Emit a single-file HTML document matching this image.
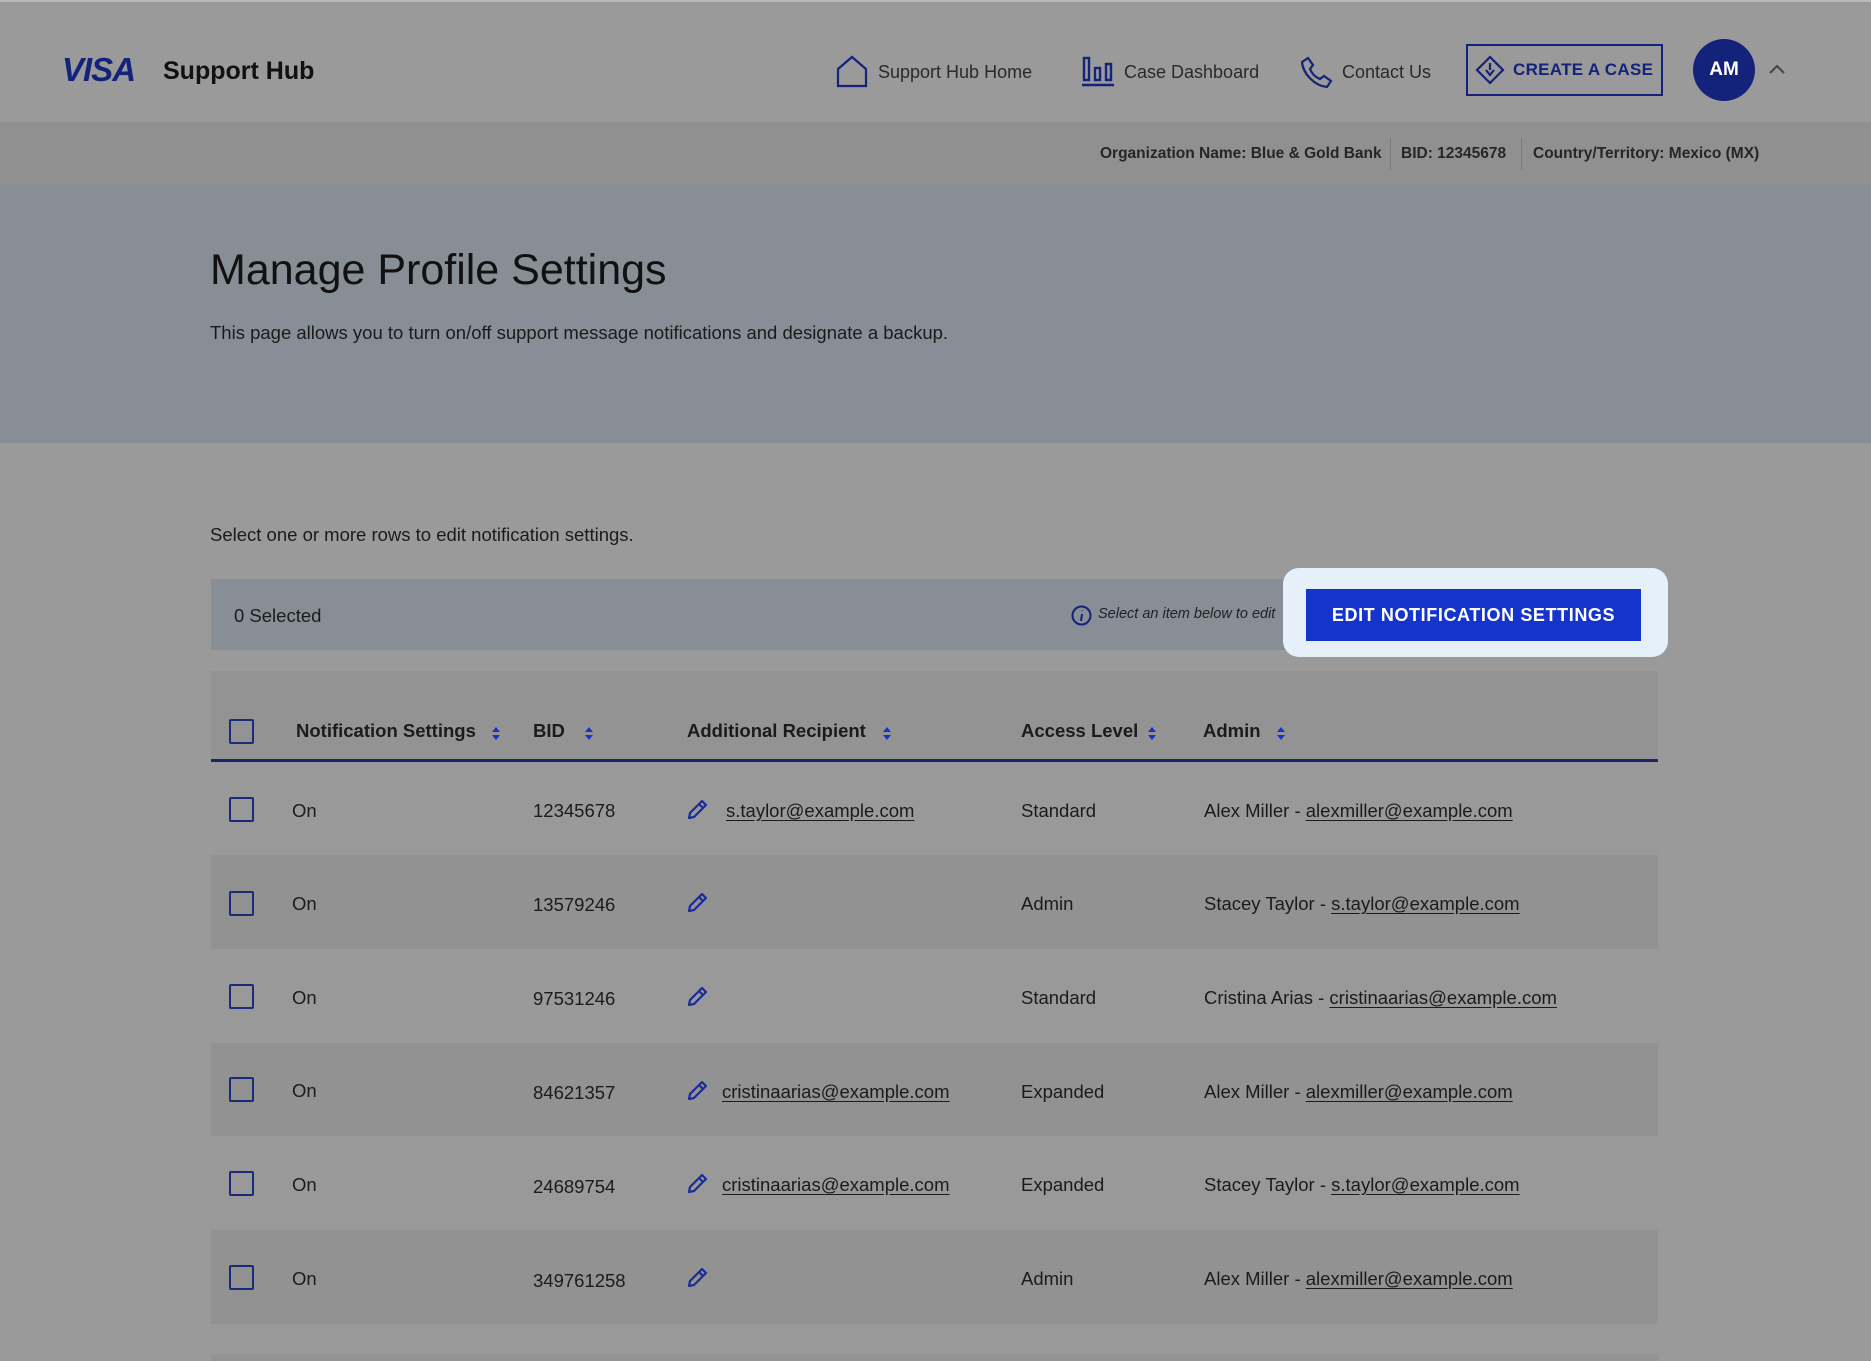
<!DOCTYPE html>
<html><head><meta charset="utf-8"><style>
*{margin:0;padding:0;box-sizing:border-box}
body{width:1871px;height:1351px;overflow:hidden;background:#9a9a9a;font-family:"Liberation Sans",sans-serif;color:#1b1b1b;position:relative}
.a{position:absolute;white-space:nowrap}
.hdr{left:0;top:0;width:1871px;height:122px;background:#9a9a9a;border-top:2px solid #b8b8b8}
.info{left:0;top:122px;width:1871px;height:63px;background:#909090}
.hero{left:0;top:185px;width:1871px;height:258px;background:#878e96}
.nav{font-size:18px;color:#2a2a2a;top:62px}
.navy{color:#13227a}
.tb{left:211px;top:579px;width:1100px;height:71px;background:#878e96}
.hl{left:1283px;top:568px;width:385px;height:89px;background:#e6f0f8;border-radius:16px}
.btn{left:1306px;top:589px;width:335px;height:52px;background:#1434cb;color:#fff;font-weight:bold;font-size:18px;letter-spacing:.6px;display:flex;align-items:center;justify-content:center}
.tbl{left:211px;top:671px;width:1447px;height:690px;background:#939393}
.hline{left:211px;top:759px;width:1447px;height:3px;background:#1c2566}
.row{left:211px;width:1447px;height:94px}
.cb{width:25px;height:25px;border:2.5px solid #1a2b7a;border-radius:2px}
.th{font-weight:bold;font-size:18.5px;top:720px}
.td{font-size:18.5px}
u{text-decoration:underline;text-underline-offset:3px}
</style></head><body>
<div class="a hdr"></div>
<div class="a" style="left:62px;top:51px;font-size:33px;font-weight:bold;font-style:italic;color:#13227a;letter-spacing:-1px">VISA</div>
<div class="a" style="left:163px;top:57px;font-size:25px;font-weight:bold;color:#111">Support Hub</div>

<svg class="a" style="left:835px;top:54px" width="34" height="34" viewBox="0 0 34 34" fill="none" stroke="#13227a" stroke-width="2.2"><path d="M3 15 L17 3 L31 15 V32 H3 Z"/></svg>
<div class="a nav" style="left:878px">Support Hub Home</div>
<svg class="a" style="left:1081px;top:55px" width="34" height="32" viewBox="0 0 34 32" fill="none" stroke="#13227a" stroke-width="2.4"><rect x="3" y="3" width="5" height="22"/><rect x="14" y="13" width="5" height="12"/><rect x="25" y="9" width="5" height="16"/><path d="M1 30 H33"/></svg>
<div class="a nav" style="left:1124px">Case Dashboard</div>
<svg class="a" style="left:1300px;top:55px" width="34" height="34" viewBox="0 0 34 34" fill="none" stroke="#13227a" stroke-width="2.2"><path d="M8 3 L13 10 L10 14 C12 19 15 22 20 24 L24 21 L31 26 L27 32 C15 31 3 19 2 7 Z"/></svg>
<div class="a nav" style="left:1342px">Contact Us</div>
<div class="a" style="left:1466px;top:44px;width:197px;height:52px;border:2px solid #13227a"></div>
<svg class="a" style="left:1475px;top:55px" width="30" height="30" viewBox="0 0 30 30" fill="none" stroke="#13227a" stroke-width="2.2"><path d="M15 2 L28 15 L15 28 L2 15 Z M15 8 V15 M11 15 L15 20 L19 15"/></svg>
<div class="a navy" style="left:1513px;top:60px;font-size:17px;font-weight:bold;letter-spacing:.3px">CREATE A CASE</div>
<div class="a" style="left:1693px;top:39px;width:62px;height:62px;border-radius:50%;background:#13227a;color:#fff;font-weight:bold;font-size:19px;display:flex;align-items:center;justify-content:center">AM</div>
<svg class="a" style="left:1768px;top:63px" width="18" height="12" viewBox="0 0 18 12" fill="none" stroke="#444" stroke-width="2"><path d="M2 10 L9 3 L16 10"/></svg>

<div class="a info"></div>
<div class="a" style="left:1100px;top:145px;font-size:15.5px;font-weight:bold;color:#262626">Organization Name: Blue &amp; Gold Bank</div>
<div class="a" style="left:1390px;top:138px;width:1px;height:32px;background:#7a7a7a"></div>
<div class="a" style="left:1401px;top:145px;font-size:15.5px;font-weight:bold;color:#262626">BID: 12345678</div>
<div class="a" style="left:1521px;top:138px;width:1px;height:32px;background:#7a7a7a"></div>
<div class="a" style="left:1533px;top:145px;font-size:15.5px;font-weight:bold;color:#262626">Country/Territory: Mexico (MX)</div>

<div class="a hero"></div>
<div class="a" style="left:210px;top:246px;font-size:43px;color:#111">Manage Profile Settings</div>
<div class="a" style="left:210px;top:322px;font-size:18.5px;color:#1b1b1b">This page allows you to turn on/off support message notifications and designate a backup.</div>
<div class="a" style="left:210px;top:524px;font-size:18.5px">Select one or more rows to edit notification settings.</div>

<div class="a tb"></div>
<div class="a" style="left:234px;top:605px;font-size:18.5px">0 Selected</div>
<svg class="a" style="left:1071px;top:605px" width="21" height="21" viewBox="0 0 21 21" fill="none" stroke="#13227a" stroke-width="2"><circle cx="10.5" cy="10.5" r="9"/><path d="M11 9 L10 16 M11.3 5.5 V6"/></svg>
<div class="a" style="left:1098px;top:606px;font-size:14.5px;font-style:italic;color:#222">Select an item below to edit</div>
<div class="a hl"></div>
<div class="a btn">EDIT NOTIFICATION SETTINGS</div>

<div class="a tbl"></div>
<div class="a row" style="top:760px;height:95px;background:#999"></div>
<div class="a row" style="top:855px;background:#929292"></div>
<div class="a row" style="top:949px;background:#999"></div>
<div class="a row" style="top:1043px;background:#929292"></div>
<div class="a row" style="top:1136px;background:#999"></div>
<div class="a row" style="top:1230px;background:#929292"></div>
<div class="a row" style="top:1324px;height:30px;background:#999"></div>
<div class="a hline"></div>

<div class="a cb" style="left:229px;top:719px"></div>
<div class="a th" style="left:296px">Notification Settings</div>
<div class="a th" style="left:533px">BID</div>
<div class="a th" style="left:687px">Additional Recipient</div>
<div class="a th" style="left:1021px">Access Level</div>
<div class="a th" style="left:1203px">Admin</div>
<svg width="0" height="0" style="position:absolute"><defs><g id="s"><path d="M4 0 L8 5 H0 Z M0 8 H8 L4 13 Z" fill="#1434cb"/></g><g id="p"><path d="M14 2 L18 6 L6 18 L1 19 L2 14 Z M11 5 L15 9" fill="none" stroke="#1a2b9a" stroke-width="2.2" stroke-linejoin="round"/></g></defs></svg>
<svg class="a" style="left:492px;top:727px" width="8" height="13"><use href="#s"/></svg>
<svg class="a" style="left:585px;top:727px" width="8" height="13"><use href="#s"/></svg>
<svg class="a" style="left:883px;top:727px" width="8" height="13"><use href="#s"/></svg>
<svg class="a" style="left:1148px;top:727px" width="8" height="13"><use href="#s"/></svg>
<svg class="a" style="left:1277px;top:727px" width="8" height="13"><use href="#s"/></svg>

<div class="a cb" style="left:229px;top:797px"></div><div class="a td" style="left:292px;top:800px">On</div><div class="a td" style="left:533px;top:800px">12345678</div>
<svg class="a" style="left:688px;top:799px" width="20" height="20"><use href="#p"/></svg><div class="a td" style="left:726px;top:800px"><u>s.taylor@example.com</u></div>
<div class="a td" style="left:1021px;top:800px">Standard</div><div class="a td" style="left:1204px;top:800px">Alex Miller - <u>alexmiller@example.com</u></div>

<div class="a cb" style="left:229px;top:891px"></div><div class="a td" style="left:292px;top:893px">On</div><div class="a td" style="left:533px;top:894px">13579246</div>
<svg class="a" style="left:688px;top:892px" width="20" height="20"><use href="#p"/></svg>
<div class="a td" style="left:1021px;top:893px">Admin</div><div class="a td" style="left:1204px;top:893px">Stacey Taylor - <u>s.taylor@example.com</u></div>

<div class="a cb" style="left:229px;top:984px"></div><div class="a td" style="left:292px;top:987px">On</div><div class="a td" style="left:533px;top:988px">97531246</div>
<svg class="a" style="left:688px;top:986px" width="20" height="20"><use href="#p"/></svg>
<div class="a td" style="left:1021px;top:987px">Standard</div><div class="a td" style="left:1204px;top:987px">Cristina Arias - <u>cristinaarias@example.com</u></div>

<div class="a cb" style="left:229px;top:1077px"></div><div class="a td" style="left:292px;top:1080px">On</div><div class="a td" style="left:533px;top:1082px">84621357</div>
<svg class="a" style="left:688px;top:1080px" width="20" height="20"><use href="#p"/></svg><div class="a td" style="left:722px;top:1081px"><u>cristinaarias@example.com</u></div>
<div class="a td" style="left:1021px;top:1081px">Expanded</div><div class="a td" style="left:1204px;top:1081px">Alex Miller - <u>alexmiller@example.com</u></div>

<div class="a cb" style="left:229px;top:1171px"></div><div class="a td" style="left:292px;top:1174px">On</div><div class="a td" style="left:533px;top:1176px">24689754</div>
<svg class="a" style="left:688px;top:1173px" width="20" height="20"><use href="#p"/></svg><div class="a td" style="left:722px;top:1174px"><u>cristinaarias@example.com</u></div>
<div class="a td" style="left:1021px;top:1174px">Expanded</div><div class="a td" style="left:1204px;top:1174px">Stacey Taylor - <u>s.taylor@example.com</u></div>

<div class="a cb" style="left:229px;top:1265px"></div><div class="a td" style="left:292px;top:1268px">On</div><div class="a td" style="left:533px;top:1270px">349761258</div>
<svg class="a" style="left:688px;top:1267px" width="20" height="20"><use href="#p"/></svg>
<div class="a td" style="left:1021px;top:1268px">Admin</div><div class="a td" style="left:1204px;top:1268px">Alex Miller - <u>alexmiller@example.com</u></div>
</body></html>
